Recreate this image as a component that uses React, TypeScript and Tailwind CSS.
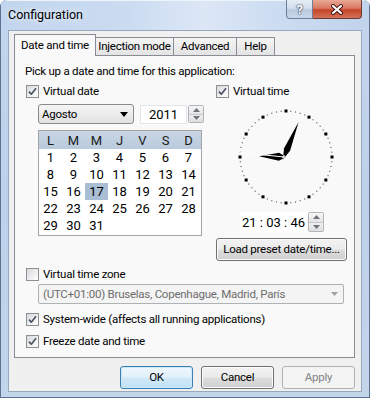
import React from "react";

function Check({ checked, label, className = "" }: { checked: boolean; label: string; className?: string }) {
  return (
    <div className={"flex items-center h-[15px] " + className}>
      <span className="ml-px w-[13px] h-[13px] border border-[#8e8f8f] bg-[linear-gradient(135deg,#d6d9dd_0%,#f4f4f5_70%,#ffffff_100%)] flex items-center justify-center shrink-0">
        {checked && (
          <svg width="11" height="11" viewBox="0 0 11 11">
            <path d="M2 5.6 L4.3 8.2 L9 2.3" fill="none" stroke="#4b5563" strokeWidth="1.7" strokeLinejoin="round" />
          </svg>
        )}
      </span>
      <span className="ml-[4px] whitespace-nowrap">{label}</span>
    </div>
  );
}

function Spinner({ h }: { h: string }) {
  return (
    <div className={"w-[16px] flex flex-col border border-[#b1b5ba] rounded-[2px] overflow-hidden " + h}>
      <div className="flex-1 flex items-center justify-center bg-[linear-gradient(180deg,#f6f6f6,#e4e4e4)] border-b border-[#c4c7cb]">
        <svg width="7" height="4" viewBox="0 0 7 4"><path d="M0 4 L3.5 0 L7 4 Z" fill="#6f7378" /></svg>
      </div>
      <div className="flex-1 flex items-center justify-center bg-[linear-gradient(180deg,#f0f0f0,#dedede)]">
        <svg width="7" height="4" viewBox="0 0 7 4"><path d="M0 0 L3.5 4 L7 0 Z" fill="#6f7378" /></svg>
      </div>
    </div>
  );
}

function hand(cx: number, cy: number, deg: number, len: number, w: number, at: number, tail: number) {
  const r = (deg * Math.PI) / 180;
  const dx = Math.sin(r), dy = -Math.cos(r);
  const px = Math.cos(r), py = Math.sin(r);
  const pts = [
    [cx + dx * len, cy + dy * len],
    [cx + dx * at + (px * w) / 2, cy + dy * at + (py * w) / 2],
    [cx - dx * tail, cy - dy * tail],
    [cx + dx * at - (px * w) / 2, cy + dy * at - (py * w) / 2],
  ];
  return pts.map((p) => p.map((v) => v.toFixed(2)).join(",")).join(" ");
}

function Clock() {
  const ticks = Array.from({ length: 60 }, (_, i) => i);
  const hc = 48, vc = 50;
  const sr = (276 * Math.PI) / 180;
  return (
    <svg width="100" height="100" viewBox="0 0 100 100" className="ml-[21px] mt-[8px] block">
      {ticks.map((i) => {
        const a = (i * 6 * Math.PI) / 180;
        const x = 50 + 46 * Math.sin(a);
        const y = 50 - 46 * Math.cos(a);
        return i % 5 === 0 ? (
          <rect key={i} x={x - 1.5} y={y - 1.5} width="3" height="3" fill="#000" />
        ) : (
          <rect key={i} x={x - 0.5} y={y - 0.5} width="1" height="1" fill="#333" />
        );
      })}
      <polygon points={hand(hc, vc, 271.5, 25, 8, 5, 2)} fill="#000" />
      <polygon points={hand(hc, vc, 22.6, 38, 6.5, 8, 3)} fill="#000" />
      <line x1={hc} y1={vc} x2={hc + 44 * Math.sin(sr)} y2={vc - 44 * Math.cos(sr)} stroke="#ffffff" strokeWidth="1" />
      <line x1={hc - 2} y1={vc} x2={hc + 2} y2={vc} stroke="#ffffff" strokeWidth="1" />
      <line x1={hc} y1={vc - 2} x2={hc} y2={vc + 2} stroke="#ffffff" strokeWidth="1" />
    </svg>
  );
}

function Calendar() {
  const heads = ["L", "M", "M", "J", "V", "S", "D"];
  const days: (number | null)[] = [];
  for (let d = 1; d <= 31; d++) days.push(d);
  while (days.length < 35) days.push(null);
  return (
    <div className="ml-[13px] mt-[6px] w-[164px] h-[106px] border border-[#a3a3a3] bg-white text-[13px] leading-[17px] tracking-normal">
      <div className="grid grid-cols-[repeat(7,23px)] h-[18px] items-center bg-[linear-gradient(180deg,#c9d6e4,#b9cadc)] text-[#1a1a1a]">
        {heads.map((h, i) => (
          <div key={i} className="text-center">{h}</div>
        ))}
      </div>
      <div className="grid grid-cols-[repeat(7,23px)] auto-rows-[17px]">
        {days.map((d, i) => (
          <div key={i} className={d === 17 ? "text-center bg-[#a9bdd3]" : "text-center"}>
            {d ?? ""}
          </div>
        ))}
      </div>
    </div>
  );
}

function Btn({ label, kind = "normal", className = "" }: { label: string; kind?: "normal" | "default" | "disabled"; className?: string }) {
  const cls =
    kind === "default"
      ? "border-[#3c7fb1] bg-[linear-gradient(180deg,#eef7fd_0%,#e2f1fb_48%,#cfe8f8_52%,#c2e2f6_100%)] text-black shadow-[inset_0_0_0_1px_#c9e8fa]"
      : kind === "disabled"
      ? "border-[#adb2b5] bg-[#f4f4f4] text-[#838383]"
      : "border-[#707070] bg-[linear-gradient(180deg,#f2f2f2_0%,#ebebeb_48%,#dddddd_52%,#cfcfcf_100%)] text-black shadow-[inset_0_0_0_1px_#fcfcfc]";
  return (
    <div className={"flex items-center justify-center border rounded-[3px] whitespace-nowrap " + cls + " " + className}>
      {label}
    </div>
  );
}

export default function App() {
  return (
    <div className="w-[370px] h-[398px] flex flex-col rounded-t-[7px] overflow-hidden bg-[linear-gradient(180deg,#c4d6ed_0%,#bdd1ea_50%,#c3d5eb_100%)] shadow-[inset_0_0_0_1px_#5d7391] text-[11.5px] leading-[15px] tracking-[-0.25px] text-black font-[family-name:Roboto,sans-serif]">
      {/* Title bar */}
      <div className="h-[30px] flex items-start bg-[linear-gradient(90deg,#c2d5ee_0%,#cbdcf1_35%,#dce7f6_55%,#ccdcf1_75%,#c0d3ec_100%)] shadow-[inset_0_1px_0_#eef4fb,inset_1px_0_0_#5d7391,inset_-1px_0_0_#5d7391,inset_0_1px_0_#5d7391]">
        <div className="ml-[8px] mt-[7px] text-[12.5px] leading-[16px] tracking-normal text-black [text-shadow:0_0_6px_#ffffff]">Configuration</div>
        <div className="ml-auto mr-[8px] flex">
          <div className="w-[27px] h-[19px] rounded-bl-[4px] border border-t-0 border-[#6e7f96] bg-[linear-gradient(180deg,#e5edf6_0%,#d3dfec_45%,#b9cadf_55%,#c8d8ea_100%)] flex items-center justify-center text-[13px] font-bold text-white [text-shadow:0_0_2px_#1d2c40,0_0_1px_#1d2c40]">
            ?
          </div>
          <div className="w-[49px] h-[19px] rounded-br-[4px] border border-t-0 border-l-0 border-[#6b3a33] bg-[linear-gradient(180deg,#e9a897_0%,#d87a63_45%,#c7442a_55%,#d27359_100%)] flex items-center justify-center">
            <svg width="14" height="11" viewBox="0 0 14 11">
              <path d="M3 2 L11 9 M11 2 L3 9" stroke="#3b1410" strokeWidth="4" strokeLinecap="round" />
              <path d="M3 2 L11 9 M11 2 L3 9" stroke="#ffffff" strokeWidth="2.2" strokeLinecap="round" />
            </svg>
          </div>
        </div>
      </div>

      {/* Client area */}
      <div className="mx-[8px] h-[362px] bg-[#f0f0f0] border border-[#97a8be] flex flex-col pl-[5px] pr-[6px] pt-[3px]">
        {/* Tabs */}
        <div className="h-[21px] flex items-end whitespace-nowrap">
          <div className="relative z-10 -mb-px w-[82px] h-[22px] border border-b-0 border-[#898c95] bg-[#f9f9f9] flex items-start justify-center pt-[3px]">
            Date and time
          </div>
          <div className="-ml-px w-[79px] h-[18px] border border-b-0 border-[#898c95] bg-[linear-gradient(180deg,#f5f5f5,#e3e3e3)] flex items-center justify-center">
            Injection mode
          </div>
          <div className="-ml-px w-[64px] h-[18px] border border-b-0 border-[#898c95] bg-[linear-gradient(180deg,#f5f5f5,#e3e3e3)] flex items-center justify-center">
            Advanced
          </div>
          <div className="-ml-px w-[39px] h-[18px] border border-b-0 border-[#898c95] bg-[linear-gradient(180deg,#f5f5f5,#e3e3e3)] flex items-center justify-center">
            Help
          </div>
        </div>

        {/* Panel */}
        <div className="w-[341px] h-[303px] border border-[#898c95] bg-[#f9f9f9] flex flex-col pl-[10px] pt-[8px]">
          <div>Pick up a date and time for this application:</div>
          <div className="flex mt-[5px]">
            <div className="w-[190px] flex flex-col">
              <Check checked label="Virtual date" />
              <div className="flex items-start ml-[13px] mt-[5px]">
                <div className="w-[96px] h-[20px] border border-[#8a8a8a] rounded-[3px] bg-[linear-gradient(180deg,#f5f5f5_0%,#ececec_50%,#e0e0e0_100%)] flex items-center pl-[3px] pr-[5px]">
                  <span>Agosto</span>
                  <svg className="ml-auto" width="8" height="5" viewBox="0 0 8 5"><path d="M0 0 L8 0 L4 5 Z" fill="#000" /></svg>
                </div>
                <div className="ml-[6px] mt-px w-[47px] h-[19px] bg-white border border-[#e2e6ea] flex items-center justify-center text-[13px] tracking-normal">2011</div>
                <div className="ml-[1px] mt-px">
                  <Spinner h="h-[18px]" />
                </div>
              </div>
              <Calendar />
            </div>
            <div className="flex flex-col">
              <Check checked label="Virtual time" />
              <Clock />
              <div className="flex ml-[25px] mt-[5px]">
                <div className="w-[67px] h-[20px] bg-white flex items-center justify-center text-[13px] tracking-normal whitespace-nowrap">21 : 03 : 46</div>
                <div className="ml-[1px]">
                  <Spinner h="h-[20px]" />
                </div>
              </div>
              <Btn label="Load preset date/time..." className="ml-px mt-[6px] w-[131px] h-[23px]" />
            </div>
          </div>
          <Check checked={false} label="Virtual time zone" className="mt-[6px]" />
          <div className="ml-[13px] mt-[2px] w-[306px] h-[20px] border border-[#adb2b5] rounded-[2px] bg-[#f4f4f4] flex items-center pl-[4px] pr-[5px] text-[#6d6d6d] whitespace-nowrap">
            <span>(UTC+01:00) Bruselas, Copenhague, Madrid, París</span>
            <svg className="ml-auto" width="7" height="4" viewBox="0 0 7 4"><path d="M0 0 L7 0 L3.5 4 Z" fill="#a0a0a0" /></svg>
          </div>
          <Check checked label="System-wide (affects all running applications)" className="mt-[8px]" />
          <Check checked label="Freeze date and time" className="mt-[7px]" />
        </div>

        {/* Buttons */}
        <div className="flex justify-end gap-[8px] mt-[8px]">
          <Btn label="OK" kind="default" className="w-[73px] h-[23px]" />
          <Btn label="Cancel" className="w-[73px] h-[23px]" />
          <Btn label="Apply" kind="disabled" className="w-[73px] h-[23px]" />
        </div>
      </div>
    </div>
  );
}
